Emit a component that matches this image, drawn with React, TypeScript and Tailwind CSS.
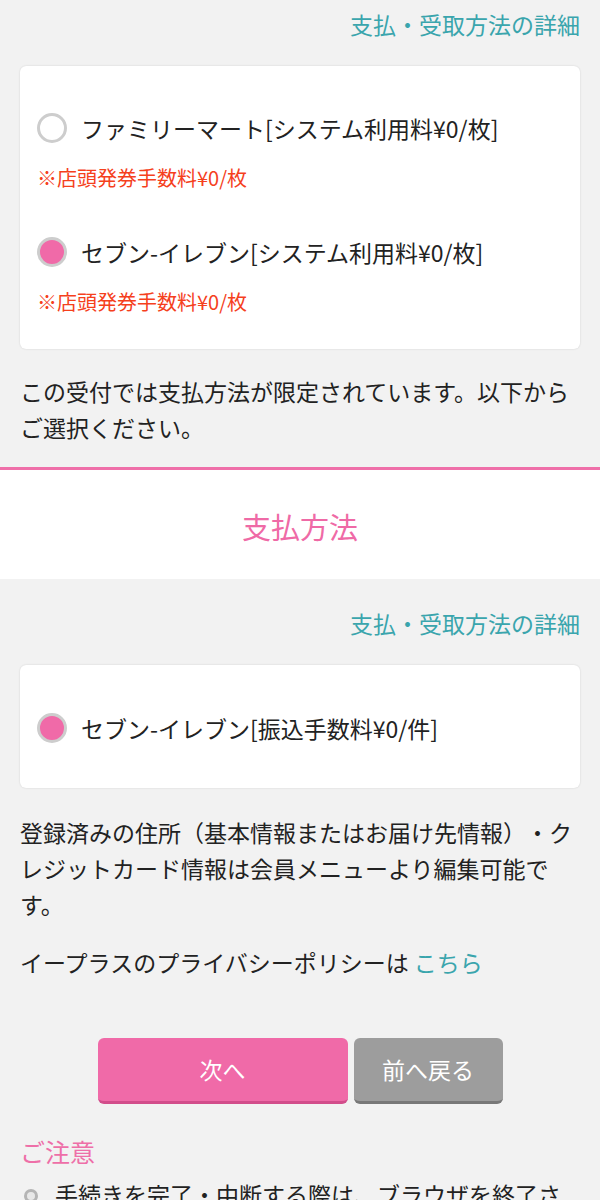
const font = { fontFamily: '"Noto Sans CJK JP", "Noto Sans", sans-serif' };

function Radio({ checked }: { checked: boolean }) {
  return (
    <span
      className={`inline-block w-[30px] h-[30px] rounded-full border-[3px] border-[#cdcdcd] shrink-0 ${
        checked ? 'bg-[#f06aa8]' : 'bg-white'
      }`}
    />
  );
}

function Option({ label, checked }: { label: string; checked: boolean }) {
  return (
    <div className="flex items-center gap-[14px] h-[36px] leading-[36px] text-[23px] text-[#222]">
      <Radio checked={checked} />
      <span>{label}</span>
    </div>
  );
}

function Note() {
  return <p className="mt-[17px] leading-[30px] text-[20px] text-[#f5401c]">※店頭発券手数料¥0/枚</p>;
}

function DetailLink() {
  return <div className="text-right leading-[36px] text-[23px] text-[#3aa5ad]">支払・受取方法の詳細</div>;
}

export default function App() {
  return (
    <div className="w-[600px] h-[1200px] overflow-hidden bg-[#f2f2f2] [text-spacing-trim:space-all]" style={font}>
      <div className="px-[20px] pt-[6px]">
        <DetailLink />
        <div className="mt-[24px] bg-white rounded-[6px] shadow-[0_0_2px_rgba(0,0,0,0.15)] px-[17px] pt-[44px] pb-[32px]">
          <Option label="ファミリーマート[システム利用料¥0/枚]" checked={false} />
          <Note />
          <div className="mt-[41px]">
            <Option label="セブン-イレブン[システム利用料¥0/枚]" checked />
          </div>
          <Note />
        </div>
        <p className="mt-[24px] text-[23px] leading-[36px] text-[#222]">
          この受付では支払方法が限定されています。以下からご選択ください。
        </p>
      </div>

      <section className="mt-[22px] border-t-[3px] border-[#ef6fa9] bg-white pt-[36px] pb-[33px]">
        <h2 className="text-center text-[29px] leading-[40px] text-[#ef6aa6]">支払方法</h2>
      </section>

      <div className="px-[20px] pt-[26px]">
        <DetailLink />
        <div className="mt-[24px] bg-white rounded-[6px] shadow-[0_0_2px_rgba(0,0,0,0.15)] px-[17px] pt-[45px] pb-[42px]">
          <Option label="セブン-イレブン[振込手数料¥0/件]" checked />
        </div>
        <p className="mt-[26px] text-[23px] leading-[36px] text-[#222]">
          登録済みの住所（基本情報またはお届け先情報）・クレジットカード情報は会員メニューより編集可能です。
        </p>
        <p className="mt-[22px] text-[23px] leading-[36px] text-[#222]">
          イープラスのプライバシーポリシーは <span className="text-[#3aa5ad]">こちら</span>
        </p>

        <div className="mt-[58px] flex justify-center gap-[6px]">
          <button className="w-[250px] h-[66px] rounded-[6px] bg-[#f06aa8] border-b-[3px] border-[#d24d8b] text-white text-[23px]">
            次へ
          </button>
          <button className="w-[149px] h-[66px] rounded-[6px] bg-[#9d9d9d] border-b-[3px] border-[#787878] text-white text-[23px]">
            前へ戻る
          </button>
        </div>

        <h3 className="mt-[29px] text-[25px] leading-[36px] text-[#ee6fa8]">ご注意</h3>
        <ul className="mt-[7px]">
          <li className="flex items-start gap-[17px] text-[23px] leading-[36px] text-[#222]">
            <span className="mt-[13px] ml-[4px] w-[14px] h-[14px] rounded-full border-[3px] border-[#b5b5b5] bg-[#e8e8e8] shrink-0" />
            <span>手続きを完了・中断する際は、ブラウザを終了させてください。</span>
          </li>
        </ul>
      </div>
    </div>
  );
}
